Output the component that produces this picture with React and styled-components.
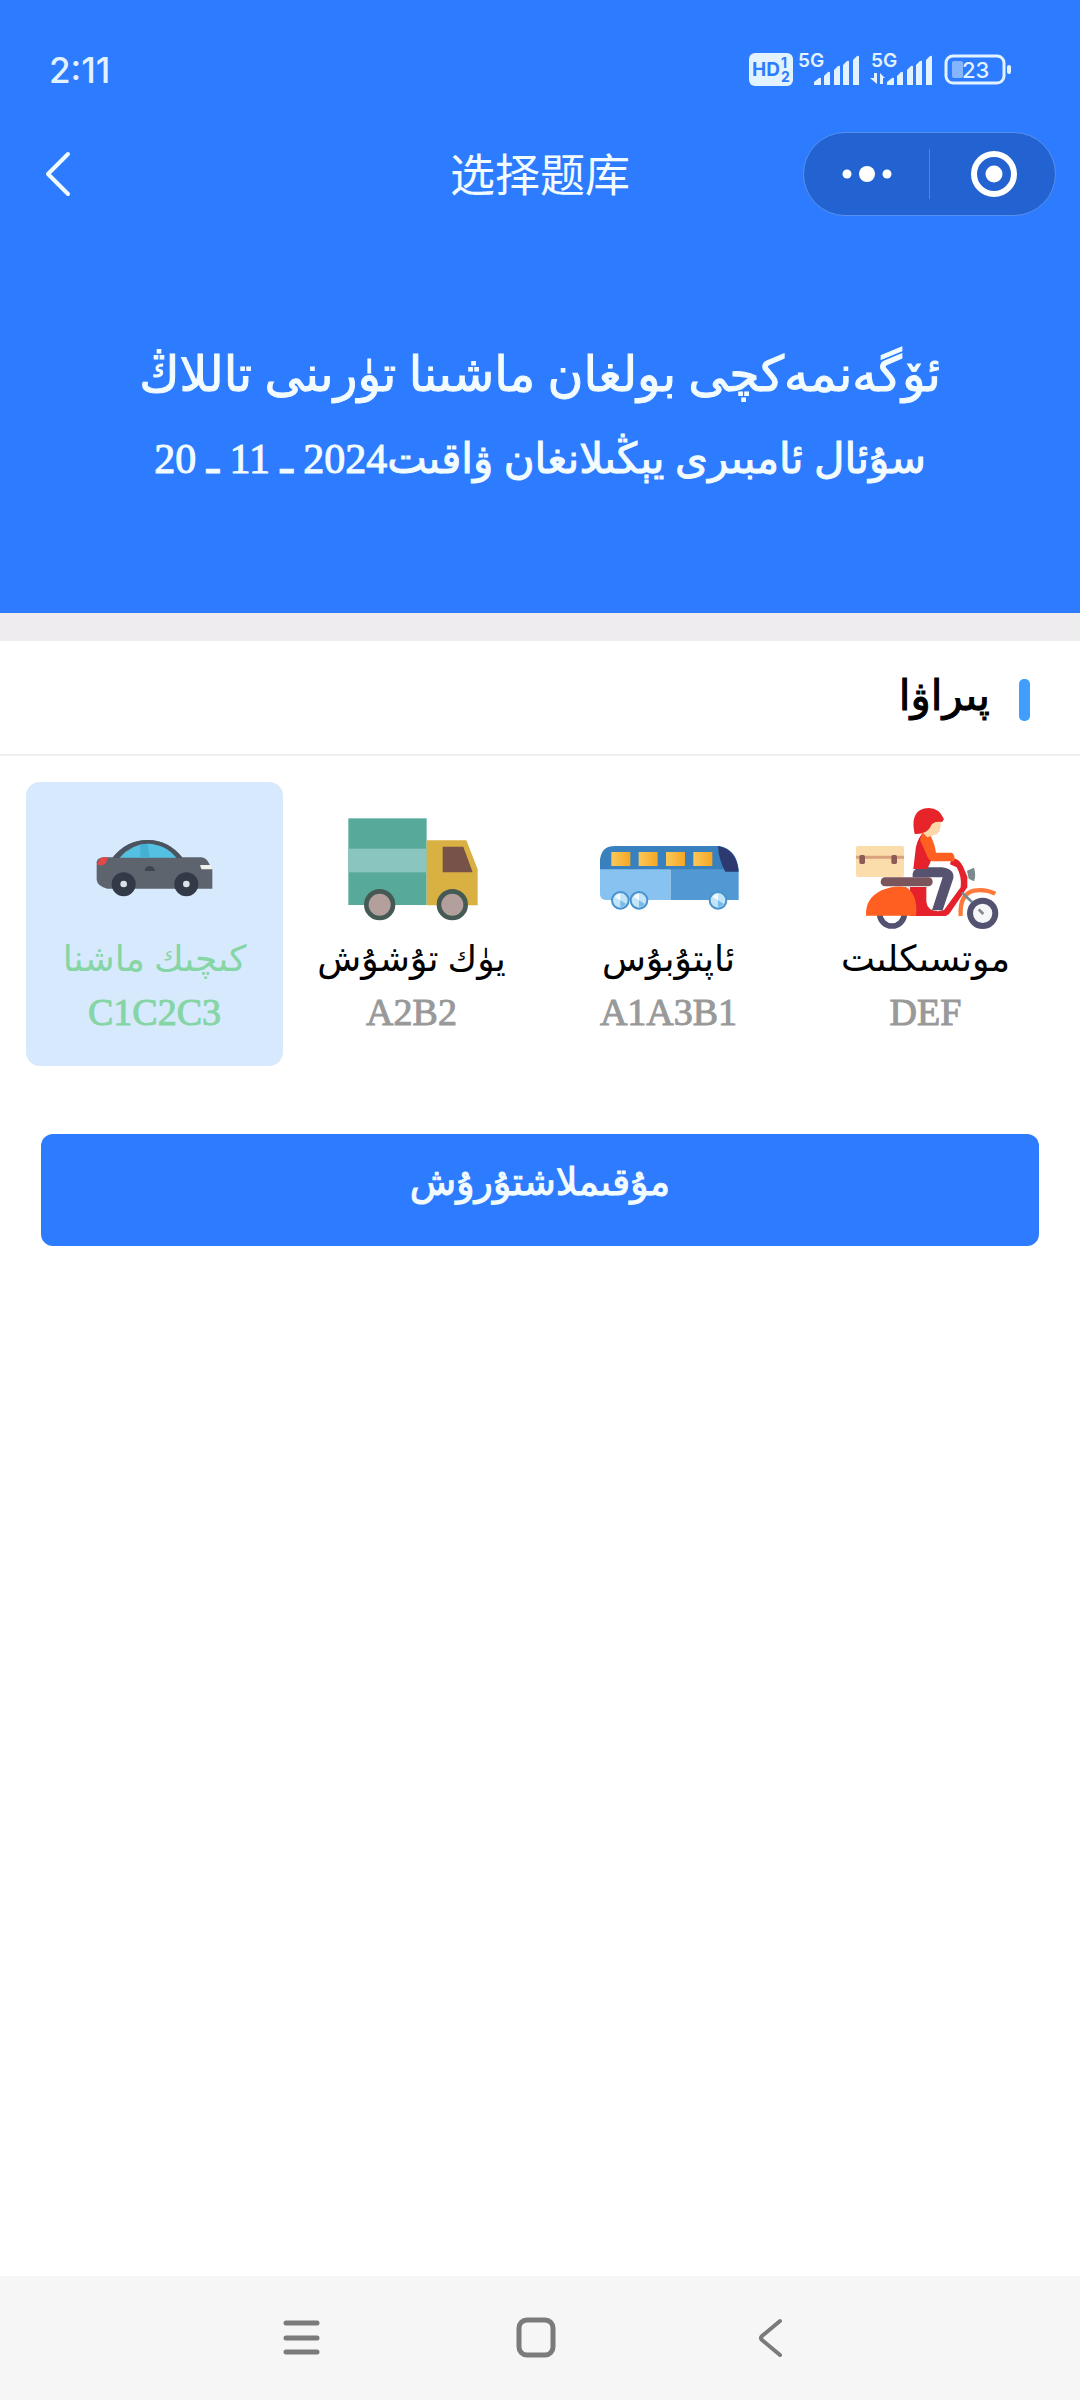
import React, { useState } from 'react';
import styled, { createGlobalStyle } from 'styled-components';

const GlobalStyle = createGlobalStyle`
  * {
    box-sizing: border-box;
  }

  body {
    margin: 0;
    background-color: #fff;
    font-family: "Liberation Serif", "DejaVu Sans", serif;
  }

  button {
    padding: 0;
    border: none;
    background: none;
    color: inherit;
    font-family: inherit;
    cursor: pointer;
  }

  svg {
    display: block;
  }
`;

const Page = styled.div`
  display: flex;
  flex-direction: column;
  min-height: 100vh;
`;

const Header = styled.header`
  background-color: #2d7bff;
  color: #f2fcff;
  padding-bottom: 114px;
`;

const StatusBar = styled.div`
  display: flex;
  align-items: center;
  justify-content: space-between;
  height: 132px;
  padding: 8px 68px 0 49px;
  font-family: Inter, sans-serif;
`;

const Clock = styled.span`
  font-size: 35px;
  font-weight: 500;
  color: #e3f2ff;
`;

const NavBar = styled.nav`
  display: grid;
  grid-template-columns: 1fr auto 1fr;
  align-items: center;
  height: 84px;
  padding: 0 24px;
`;

const BackButton = styled.button`
  justify-self: start;
  margin-left: 16px;
`;

const NavTitle = styled.h1`
  margin: 0;
  padding-bottom: 2px;
  font-family: "Noto Sans CJK SC", sans-serif;
  font-size: 45px;
  font-weight: 400;
  line-height: 60px;
`;

const Capsule = styled.div`
  justify-self: end;
  display: flex;
  align-items: center;
  width: 253px;
  height: 84px;
  border: 1px solid #5590ee;
  border-radius: 42px;
  background-color: #2363d1;
`;

const CapsuleButton = styled.button`
  flex: 1;
  display: flex;
  justify-content: center;
`;

const CapsuleDivider = styled.span`
  width: 1px;
  height: 50px;
  background-color: #4a86e6;
`;

const Intro = styled.div`
  display: flex;
  flex-direction: column;
  align-items: center;
  padding-top: 119px;
  direction: rtl;
  -webkit-text-stroke: 1px currentColor;
`;

const IntroTitle = styled.h2`
  margin: 0;
  font-size: 49px;
  font-weight: 400;
  line-height: 80px;
  white-space: nowrap;
`;

const IntroDate = styled.p`
  margin: 4px 0 0;
  font-size: 42px;
  line-height: 80px;
  white-space: nowrap;
`;

const SectionHeader = styled.div`
  display: flex;
  align-items: center;
  gap: 29px;
  height: 143px;
  padding: 4px 50px 0;
  border-top: 28px solid #eeecef;
  border-bottom: 2px solid #eeeeee;
  direction: rtl;
`;

const SectionBar = styled.span`
  width: 11px;
  height: 42px;
  border-radius: 5px;
  background-color: #409eff;
`;

const SectionTitle = styled.h3`
  margin: 0;
  padding-bottom: 8px;
  font-size: 42px;
  font-weight: 400;
  line-height: 60px;
  -webkit-text-stroke: 1px currentColor;
`;

const VehicleList = styled.div`
  display: grid;
  grid-template-columns: repeat(4, 1fr);
  padding: 26px 26px 0;
`;

const VehicleTile = styled.button`
  display: flex;
  flex-direction: column;
  align-items: center;
  padding: 18px 0 28px;
  border-radius: 14px;
  background-color: ${(props) => (props.$active ? '#d7e9fd' : 'transparent')};
`;

const VehicleName = styled.span`
  margin-top: 2px;
  font-size: 36px;
  line-height: 54px;
  white-space: nowrap;
  color: ${(props) => (props.$active ? '#85d5a5' : '#000')};
`;

const VehicleCode = styled.span`
  font-size: 38px;
  line-height: 52px;
  color: ${(props) => (props.$active ? '#85d5a5' : '#999')};
  -webkit-text-stroke: 1px currentColor;
`;

const SubmitButton = styled.button`
  height: 112px;
  margin: 68px 41px 40px;
  padding-bottom: 16px;
  border-radius: 12px;
  background-color: #2d7bff;
  color: #f2fcff;
  font-size: 38px;
  -webkit-text-stroke: 1px currentColor;
`;

const SystemBar = styled.footer`
  display: flex;
  justify-content: center;
  gap: 194px;
  margin-top: auto;
  padding: 41px 9px 42px 0;
  background-color: #f6f6f6;
`;

const CarIcon = () => (
  <svg width="150" height="130" viewBox="180 90 450 390" aria-hidden="true">
    <path d="M230 275Q234 263 250 262H278Q320 210 383 210Q445 210 487 262H545Q560 264 568 282L577 298V356H262Q233 350 230 330Z" fill="#5d646e" />
    <path d="M278 264Q320 210 383 210Q445 210 487 264H470Q430 222 383 221Q330 222 298 264Z" fill="#4b545e" />
    <path d="M299 263Q335 222 383 221Q437 223 469 263Z" fill="#55c1e2" />
    <path d="M360 224L383 221L389 263H362Z" fill="#46afd4" />
    <path d="M232 286Q235 265 248 262H263Q262 282 246 286Z" fill="#e34848" />
    <path d="M541 285H573L577 298H545Q540 292 541 285Z" fill="#f3f1ec" />
    <path d="M374 303Q374 290 389 288Q404 290 405 303Z" fill="#3f454f" />
    <circle cx="311" cy="343" r="36" fill="#323a47" />
    <circle cx="499" cy="343" r="36" fill="#323a47" />
    <circle cx="311" cy="342" r="10" fill="#dbe2ea" />
    <circle cx="499" cy="342" r="10" fill="#dbe2ea" />
  </svg>
);

const TruckIcon = () => (
  <svg width="150" height="130" viewBox="141 90 450 390" aria-hidden="true">
    <rect x="175" y="145" width="235" height="260" fill="#57aa9a" />
    <rect x="175" y="236" width="235" height="71" fill="#8ac5bf" />
    <path d="M410 211H529L563 298V406H410Z" fill="#d9b042" />
    <path d="M458 230H520L548 307H458Z" fill="#775248" />
    <circle cx="269" cy="404" r="40" fill="#b39f9b" stroke="#455a55" strokeWidth="14" />
    <circle cx="487" cy="404" r="40" fill="#b39f9b" stroke="#455a55" strokeWidth="14" />
  </svg>
);

const BusWheel = ({ cx }) => (
  <g>
    <circle cx={cx} cy="391" r="25" fill="#c2e4f8" stroke="#4a92cd" strokeWidth="6" />
    <path d={`M${cx} 391L${cx - 17} 381A20 20 0 0 1 ${cx} 371Z`} fill="#f3fbff" />
    <path d={`M${cx} 391L${cx + 17} 401A20 20 0 0 1 ${cx} 411Z`} fill="#79bbea" />
  </g>
);

const BusIcon = () => (
  <svg width="150" height="130" viewBox="132 90 450 390" aria-hidden="true">
    <defs>
      <linearGradient id="busWindow">
        <stop offset="0" stopColor="#fbc85b" />
        <stop offset="1" stopColor="#f5a623" />
      </linearGradient>
    </defs>
    <path d="M150 300V268Q155 228 195 228H508Q560 238 566 300Z" fill="#3981be" />
    <path d="M150 298H362V390H166Q150 388 150 372Z" fill="#87c2f0" />
    <path d="M362 298H566V390H362Z" fill="#5299d3" />
    <path d="M504 228Q560 238 566 305H526Q506 270 504 228Z" fill="#2c3a70" />
    {[184, 266, 348, 430].map((x) => (
      <rect key={x} x={x} y="246" width="57" height="42" fill="url(#busWindow)" />
    ))}
    <BusWheel cx={211} />
    <BusWheel cx={267} />
    <BusWheel cx={504} />
  </svg>
);

const MotoIcon = () => (
  <svg width="150" height="130" viewBox="123 90 450 390" aria-hidden="true">
    <rect x="138" y="228" width="144" height="93" rx="6" fill="#fbdcab" />
    <path d="M138 257H282V266H138Z" fill="#d9a27c" />
    <rect x="148" y="255" width="17" height="27" rx="5" fill="#8d5a55" />
    <rect x="244" y="255" width="17" height="27" rx="5" fill="#8d5a55" />
    <circle cx="246" cy="431" r="37" fill="#fff" stroke="#535271" strokeWidth="17" />
    <path d="M300 351H349V395Q352 422 384 424L402 420L452 352Q456 320 440 292L420 283L425 265Q445 264 458 287L472 320V352L420 428Q413 438 400 438H300Z" fill="#e5222b" />
    <path d="M168 437Q165 385 215 361Q250 345 288 351Q325 375 318 437Z" fill="#ff5f21" />
    <rect x="212" y="322" width="156" height="27" rx="13" fill="#7b555c" />
    <path d="M308 322Q305 298 328 292H395Q434 296 430 325L398 421H366L398 322Z" fill="#55536f" />
    <path d="M337 190Q318 215 316 245L310 297H352L375 245L360 196Z" fill="#e5222b" />
    <path d="M337 190H357Q373 215 378 248H426Q436 255 433 274H366Q354 270 348 250L330 210Z" fill="#ff5f21" />
    <path d="M340 150H392Q394 192 374 194L352 202L340 190Z" fill="#fdd7a8" />
    <path d="M314 192Q300 128 340 116Q385 106 402 148L396 156Q366 152 361 172Q348 194 314 192Z" fill="#e8242b" />
    <path d="M471 302L492 293Q499 314 492 334L476 326Z" fill="#7c8a8c" />
    <path d="M452 438Q448 372 492 362Q525 356 556 371" fill="none" stroke="#ff7a3a" strokeWidth="13" />
    <path d="M456 368L486 396" stroke="#7c8a8c" strokeWidth="8" />
    <circle cx="518" cy="430" r="38" fill="#f4f6f8" stroke="#535271" strokeWidth="18" />
    <path d="M506 418L520 432" stroke="#7c8a8c" strokeWidth="8" />
  </svg>
);

const StatusIcons = () => (
  <svg width="264" height="52" viewBox="0 -8 264 52" fill="#e3f2ff" fontFamily="Inter, sans-serif" aria-label="5G, 23%">
    <rect x="1" y="1" width="44" height="33" rx="6" />
    <text x="4" y="24" fontSize="19" fontWeight="700" fill="#2d7bff">HD</text>
    <text x="33" y="16" fontSize="14" fontWeight="700" fill="#2d7bff">1</text>
    <text x="33" y="30" fontSize="14" fontWeight="700" fill="#2d7bff">2</text>
    <text x="50" y="15" fontSize="19" fontWeight="600">5G</text>
    <path d="M66 30L71 26Q73 25 73 27V33H66ZM76 24L80 20Q82 19 82 21V33H76ZM86 18L90 14Q92 13 92 15V33H86ZM95 13L99 9Q101 8 101 10V33H95ZM105 8L109 4Q111 3 111 5V33H105Z" />
    <text x="123" y="15" fontSize="19" fontWeight="600">5G</text>
    <path d="M126 21H129V32L122 26H126ZM132 32V21L137 26H135V32Z" />
    <path d="M139 30L144 26Q146 25 146 27V33H139ZM149 24L153 20Q155 19 155 21V33H149ZM159 18L163 14Q165 13 165 15V33H159ZM168 13L172 9Q174 8 174 10V33H168ZM178 8L182 4Q184 3 184 5V33H178Z" />
    <rect x="198" y="4" width="58" height="27" rx="7" fill="none" stroke="#e3f2ff" strokeWidth="3" />
    <rect x="204" y="9" width="11" height="17" rx="2" fill="#85b5ff" />
    <rect x="259" y="13" width="4" height="9" rx="2" />
    <text x="214" y="26" fontSize="22" fontWeight="500">23</text>
  </svg>
);

const vehicles = [
  { id: 'car', name: 'كىچىك ماشنا', code: 'C1C2C3', Icon: CarIcon },
  { id: 'truck', name: 'يۈك تۇشۇش', code: 'A2B2', Icon: TruckIcon },
  { id: 'bus', name: 'ئاپتۇبۇس', code: 'A1A3B1', Icon: BusIcon },
  { id: 'moto', name: 'موتسىكلىت', code: 'DEF', Icon: MotoIcon },
];

const App = () => {
  const [selected, setSelected] = useState('car');

  return (
    <Page>
      <GlobalStyle />
      <Header>
        <StatusBar>
          <Clock>2:11</Clock>
          <StatusIcons />
        </StatusBar>
        <NavBar>
          <BackButton type="button" aria-label="返回">
            <svg width="36" height="48" viewBox="0 0 36 48" fill="none" stroke="#f2fcff" strokeWidth="4" strokeLinecap="round" strokeLinejoin="round">
              <path d="M28 4L8 24L28 44" />
            </svg>
          </BackButton>
          <NavTitle>选择题库</NavTitle>
          <Capsule>
            <CapsuleButton type="button" aria-label="更多">
              <svg width="50" height="18" viewBox="0 0 50 18" fill="#fff">
                <circle cx="5" cy="9" r="4.5" />
                <circle cx="25" cy="9" r="8" />
                <circle cx="45" cy="9" r="4.5" />
              </svg>
            </CapsuleButton>
            <CapsuleDivider />
            <CapsuleButton type="button" aria-label="关闭">
              <svg width="48" height="48" viewBox="0 0 48 48">
                <circle cx="25" cy="24" r="20" fill="none" stroke="#fff" strokeWidth="6" />
                <circle cx="25" cy="24" r="8.5" fill="#fff" />
              </svg>
            </CapsuleButton>
          </Capsule>
        </NavBar>
        <Intro lang="ug">
          <IntroTitle>ئۆگەنمەكچى بولغان ماشىنا تۈرىنى تاللاڭ</IntroTitle>
          <IntroDate>سۇئال ئامبىرى يېڭىلانغان ۋاقىت2024 ـ 11 ـ 20</IntroDate>
        </Intro>
      </Header>

      <SectionHeader lang="ug">
        <SectionBar />
        <SectionTitle>پىراۋا</SectionTitle>
      </SectionHeader>

      <VehicleList>
        {vehicles.map(({ id, name, code, Icon }) => (
          <VehicleTile
            key={id}
            type="button"
            $active={selected === id}
            aria-pressed={selected === id}
            onClick={() => setSelected(id)}
          >
            <Icon />
            <VehicleName lang="ug" dir="rtl" $active={selected === id}>{name}</VehicleName>
            <VehicleCode $active={selected === id}>{code}</VehicleCode>
          </VehicleTile>
        ))}
      </VehicleList>

      <SubmitButton type="button" lang="ug" dir="rtl">مۇقىملاشتۇرۇش</SubmitButton>

      <SystemBar>
        <button type="button" aria-label="菜单">
          <svg width="40" height="41" viewBox="0 0 40 41" stroke="#7b7b7b" strokeWidth="5" strokeLinecap="round">
            <path d="M4 6H35M4 21H35M4 35H35" />
          </svg>
        </button>
        <button type="button" aria-label="主页">
          <svg width="40" height="41" viewBox="0 0 40 41" fill="none" stroke="#7b7b7b" strokeWidth="5">
            <rect x="3" y="3" width="34" height="35" rx="8" />
          </svg>
        </button>
        <button type="button" aria-label="后退">
          <svg width="40" height="41" viewBox="0 0 40 41" fill="none" stroke="#7b7b7b" strokeWidth="4" strokeLinecap="round" strokeLinejoin="round">
            <path d="M30 4L12 19Q10 21 12 23L30 38" />
          </svg>
        </button>
      </SystemBar>
    </Page>
  );
};

export default App;
